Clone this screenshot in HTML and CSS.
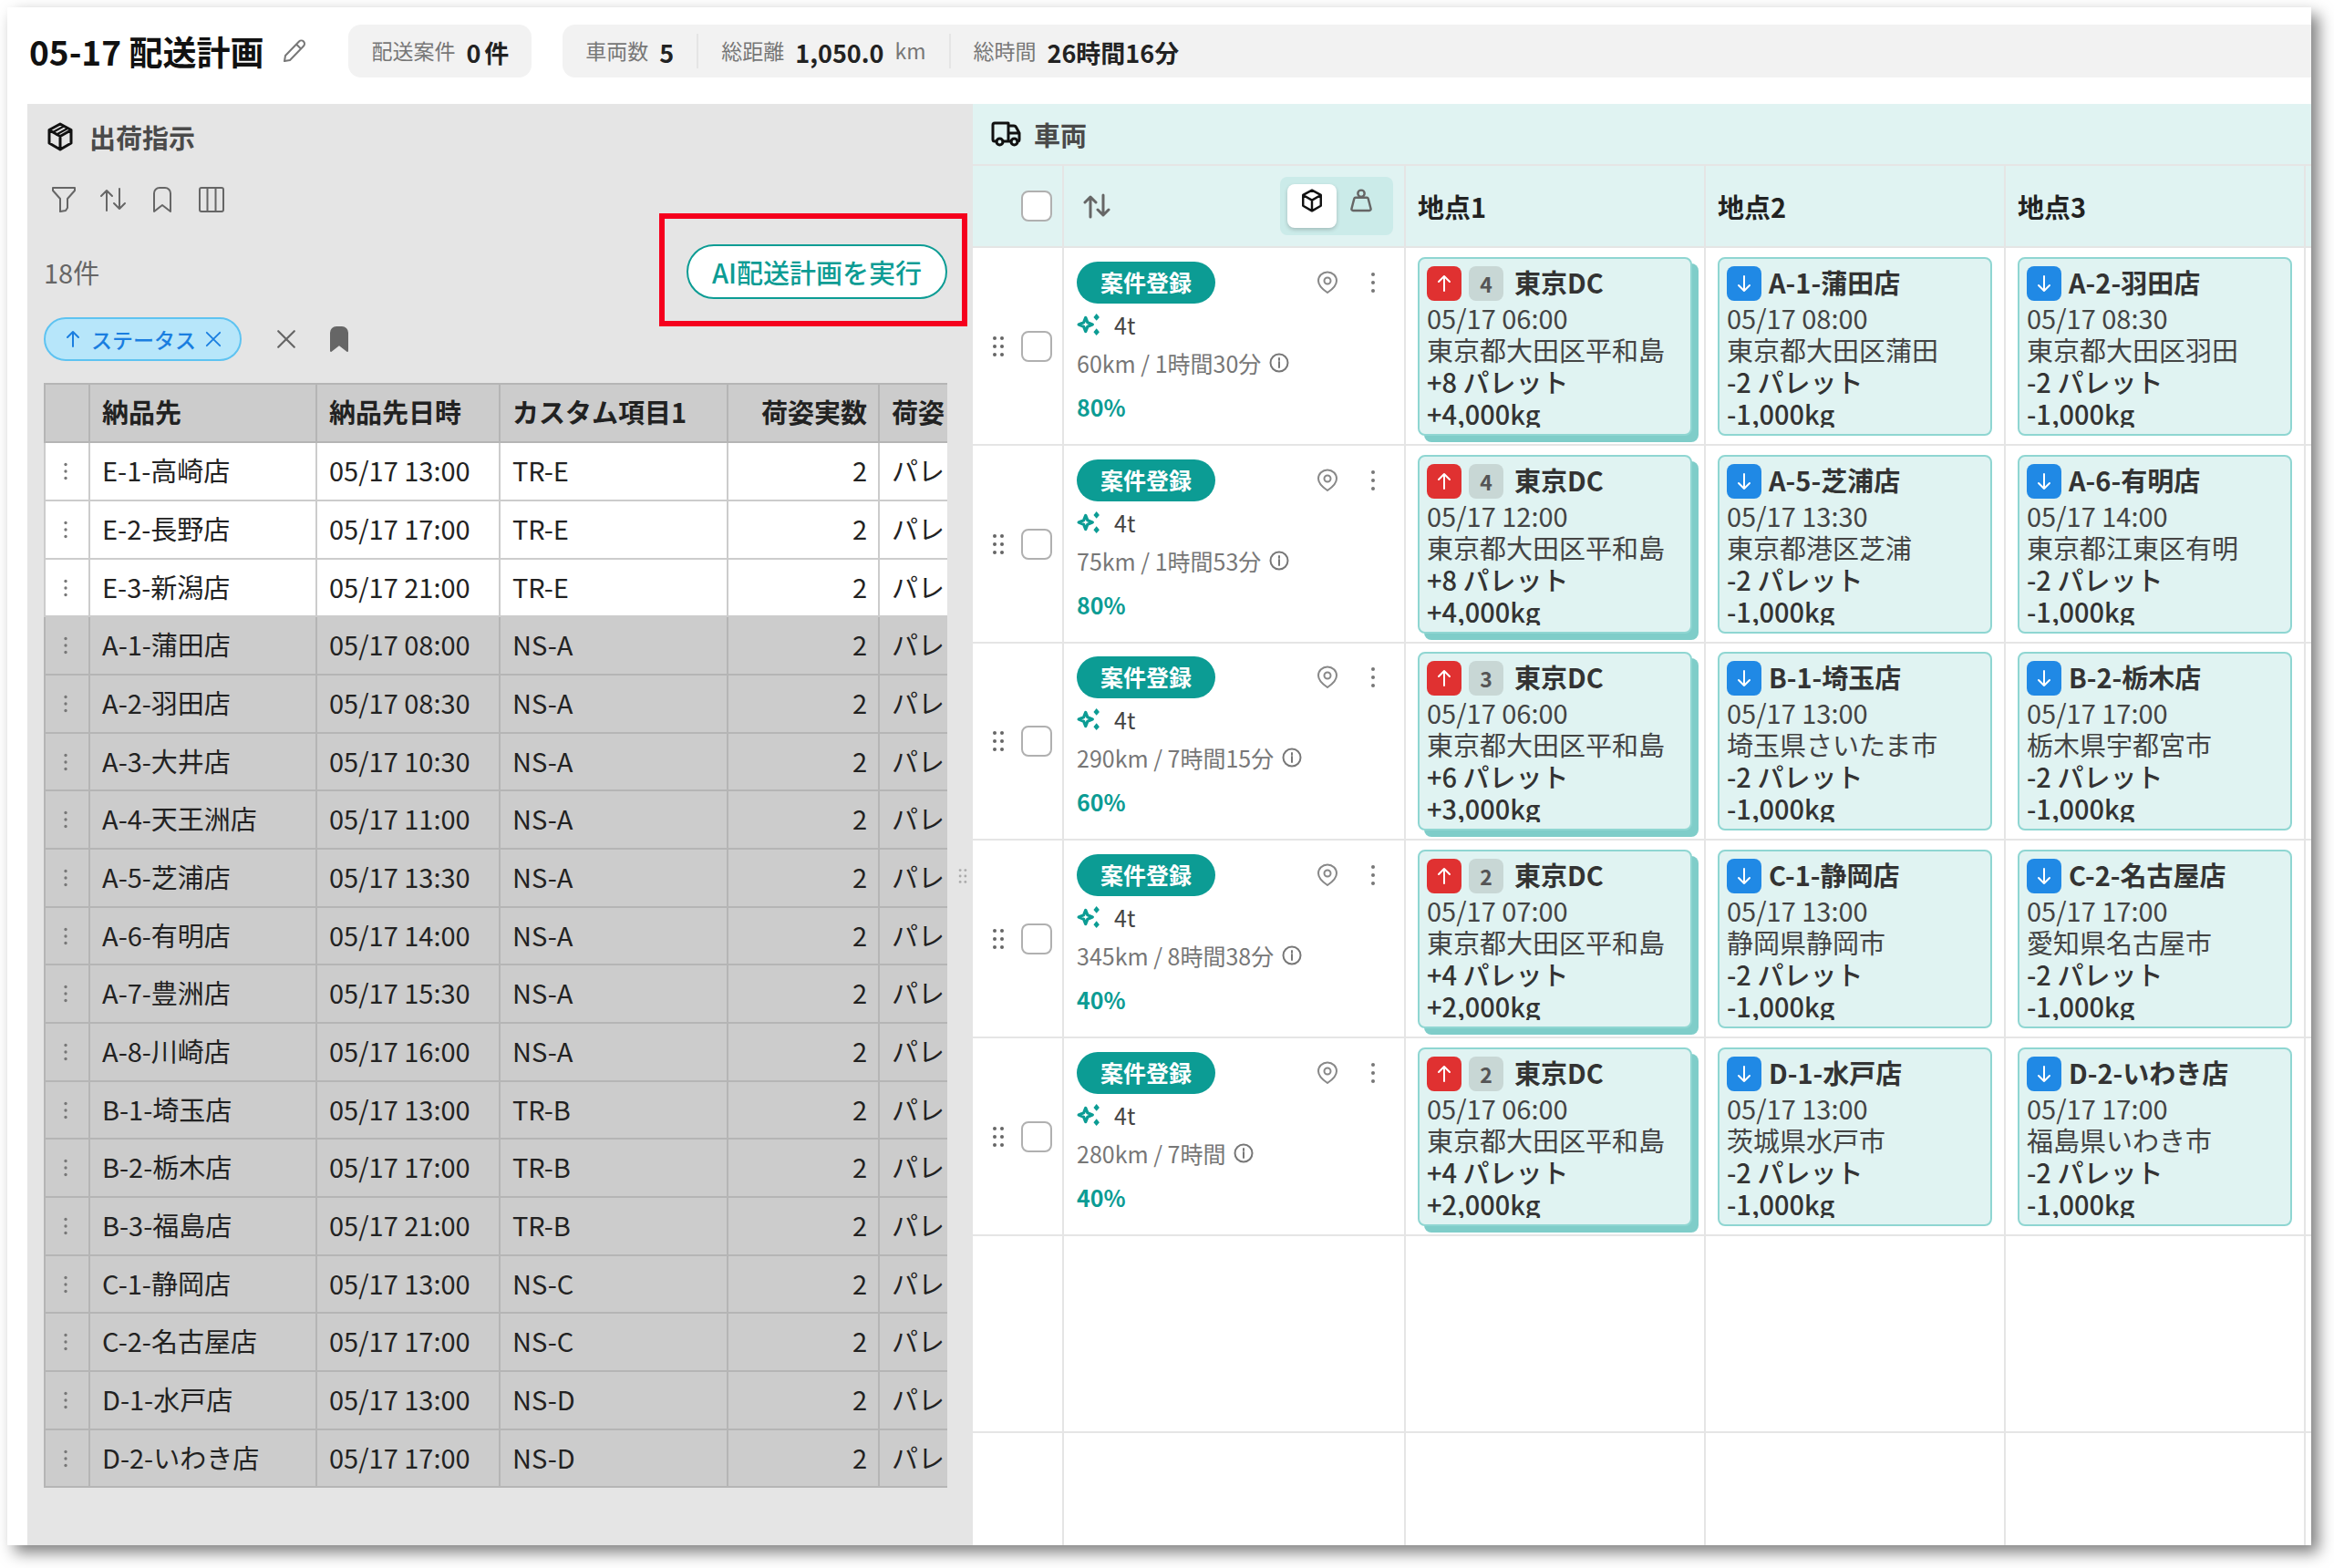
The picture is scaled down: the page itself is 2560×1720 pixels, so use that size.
FILE: index.html
```html
<!DOCTYPE html>
<html lang="ja">
<head>
<meta charset="utf-8">
<title>05-17 配送計画</title>
<link rel="stylesheet" href="styles.css">
</head>
<body>
<svg class="sprite" aria-hidden="true">
  <symbol id="package" viewBox="0 0 30 32"><path d="M15 2 27 8.500V23L15 30 3 23V8.500ZM3.500 9 15 15.500 26.500 9M15 15.500V30"/><path stroke-width="2" d="M7 11 19 4.500M11 13.500 23 7"/></symbol>
  <symbol id="cube" viewBox="0 0 30 32"><path d="M15 2 27 8.500V23L15 30 3 23V8.500ZM3.500 9 15 15.500 26.500 9M15 15.500V30"/></symbol>
  <symbol id="weight" viewBox="0 0 30 32"><circle cx="15" cy="6.500" r="4.500"/><path d="M7.500 12h15a2 2 0 0 1 2 1.500L28 27a2 2 0 0 1-2 2.500H4A2 2 0 0 1 2 27l3.500-13.500a2 2 0 0 1 2-1.500Z"/></symbol>
  <symbol id="truck" viewBox="0 0 34 28"><path d="M6 22H4a2 2 0 0 1-2-2V4a2 2 0 0 1 2-2h15v20h-6M19 5h6a3 3 0 0 1 2.500 1.500L31 13v7a2 2 0 0 1-2 2M19 13h12M19 22h3"/><circle cx="9.500" cy="22.500" r="3.500"/><circle cx="25.500" cy="22.500" r="3.500"/></symbol>
  <symbol id="filter" viewBox="0 0 28 30"><path d="M2 2h24v3l-8 9v10l-2 3-6 1V14L2 5Z"/></symbol>
  <symbol id="sort" viewBox="0 0 30 26"><path d="M8 25V3M2 9l6-6 6 6M22 1v22M16 17l6 6 6-6"/></symbol>
  <symbol id="bookmark" viewBox="0 0 22 30"><path d="M2 28V8a6 6 0 0 1 6-6h6a6 6 0 0 1 6 6v20l-9-7Z"/></symbol>
  <symbol id="columns" viewBox="0 0 30 30"><rect x="2" y="2" width="26" height="26" rx="2"/><path d="M10.500 2v26M19.500 2v26"/></symbol>
  <symbol id="pencil" viewBox="0 0 28 28"><path d="M3 25l1-6L19 3.500a3.500 3.500 0 0 1 5 5L9 24ZM16 6.500l5 5"/></symbol>
  <symbol id="up" viewBox="0 0 20 20"><path d="M10 18V2M4 8l6-6 6 6"/></symbol>
  <symbol id="down" viewBox="0 0 20 20"><path d="M10 2v16M4 12l6 6 6-6"/></symbol>
  <symbol id="close" viewBox="0 0 20 20"><path d="M2 2l16 16M18 2 2 18"/></symbol>
  <symbol id="pin" viewBox="0 0 24 26"><path d="M12 24C6 20 2 15 2 11a10 9.500 0 0 1 20 0c0 4-4 9-10 13Z"/><circle cx="12" cy="11" r="3.500"/></symbol>
  <symbol id="info" viewBox="0 0 22 22"><circle cx="11" cy="11" r="9.500"/><path d="M11 10v6M11 6v2"/></symbol>
  <symbol id="dots" viewBox="0 0 6 24"><g class="dot"><circle cx="3" cy="3" r="2"/><circle cx="3" cy="12" r="2"/><circle cx="3" cy="21" r="2"/></g></symbol>
  <symbol id="grip" viewBox="0 0 14 24"><g class="dot"><circle cx="3" cy="3" r="2"/><circle cx="3" cy="12" r="2"/><circle cx="3" cy="21" r="2"/><circle cx="11" cy="3" r="2"/><circle cx="11" cy="12" r="2"/><circle cx="11" cy="21" r="2"/></g></symbol>
  <symbol id="sparkle" viewBox="0 0 24 24"><path d="M9 5l2 5 5 2-5 2-2 5-2-5-5-2 5-2Z"/><g class="dot"><path d="M20 1l3 3.500-3 3.500-3-3.500ZM20 16l3 3.500-3 3.500-3-3.500Z"/></g></symbol>
</svg>

<main class="window">
  <header class="topbar">
    <h1>05-17 配送計画</h1>
    <button class="icon-btn edit" aria-label="名前を編集"><svg class="i28"><use href="#pencil"/></svg></button>
    <div class="stats single">
      <div class="stat"><span>配送案件</span><b>0</b><b class="unit">件</b></div>
    </div>
    <div class="stats wide">
      <div class="stat"><span>車両数</span><b>5</b></div>
      <div class="stat"><span>総距離</span><b>1,050.0</b><span>km</span></div>
      <div class="stat"><span>総時間</span><b>26時間16分</b></div>
    </div>
  </header>

  <div class="workspace">
    <section class="orders">
      <div class="orders-body">
        <h2 class="heading"><svg class="i32 ink"><use href="#package"/></svg>出荷指示</h2>
        <div class="tools">
          <button class="icon-btn" aria-label="絞り込み"><svg class="i30"><use href="#filter"/></svg></button>
          <button class="icon-btn" aria-label="並び替え"><svg class="i30"><use href="#sort"/></svg></button>
          <button class="icon-btn" aria-label="保存"><svg class="i30"><use href="#bookmark"/></svg></button>
          <button class="icon-btn" aria-label="列"><svg class="i30"><use href="#columns"/></svg></button>
        </div>
        <div class="run-row">
          <span class="count">18件</span>
          <div class="callout"><button class="run">AI配送計画を実行</button></div>
        </div>
        <div class="chips">
          <button class="chip"><svg class="i20"><use href="#up"/></svg>ステータス<svg class="i18"><use href="#close"/></svg></button>
          <button class="icon-btn" aria-label="クリア"><svg class="i22"><use href="#close"/></svg></button>
          <button class="icon-btn" aria-label="条件を保存"><svg class="i30 solid"><use href="#bookmark"/></svg></button>
        </div>
        <table class="order-table">
          <colgroup><col class="c-grip"><col class="c-dest"><col class="c-date"><col class="c-custom"><col class="c-num"><col></colgroup>
          <thead><tr><th></th><th>納品先</th><th>納品先日時</th><th>カスタム項目1</th><th class="num">荷姿実数</th><th>荷姿</th></tr></thead>
          <tbody>
            <tr class="open"><td><svg class="grip-v"><use href="#dots"/></svg></td><td>E-1-高崎店</td><td>05/17 13:00</td><td>TR-E</td><td class="num">2</td><td>パレ</td></tr>
            <tr class="open"><td><svg class="grip-v"><use href="#dots"/></svg></td><td>E-2-長野店</td><td>05/17 17:00</td><td>TR-E</td><td class="num">2</td><td>パレ</td></tr>
            <tr class="open"><td><svg class="grip-v"><use href="#dots"/></svg></td><td>E-3-新潟店</td><td>05/17 21:00</td><td>TR-E</td><td class="num">2</td><td>パレ</td></tr>
            <tr><td><svg class="grip-v"><use href="#dots"/></svg></td><td>A-1-蒲田店</td><td>05/17 08:00</td><td>NS-A</td><td class="num">2</td><td>パレ</td></tr>
            <tr><td><svg class="grip-v"><use href="#dots"/></svg></td><td>A-2-羽田店</td><td>05/17 08:30</td><td>NS-A</td><td class="num">2</td><td>パレ</td></tr>
            <tr><td><svg class="grip-v"><use href="#dots"/></svg></td><td>A-3-大井店</td><td>05/17 10:30</td><td>NS-A</td><td class="num">2</td><td>パレ</td></tr>
            <tr><td><svg class="grip-v"><use href="#dots"/></svg></td><td>A-4-天王洲店</td><td>05/17 11:00</td><td>NS-A</td><td class="num">2</td><td>パレ</td></tr>
            <tr><td><svg class="grip-v"><use href="#dots"/></svg></td><td>A-5-芝浦店</td><td>05/17 13:30</td><td>NS-A</td><td class="num">2</td><td>パレ</td></tr>
            <tr><td><svg class="grip-v"><use href="#dots"/></svg></td><td>A-6-有明店</td><td>05/17 14:00</td><td>NS-A</td><td class="num">2</td><td>パレ</td></tr>
            <tr><td><svg class="grip-v"><use href="#dots"/></svg></td><td>A-7-豊洲店</td><td>05/17 15:30</td><td>NS-A</td><td class="num">2</td><td>パレ</td></tr>
            <tr><td><svg class="grip-v"><use href="#dots"/></svg></td><td>A-8-川崎店</td><td>05/17 16:00</td><td>NS-A</td><td class="num">2</td><td>パレ</td></tr>
            <tr><td><svg class="grip-v"><use href="#dots"/></svg></td><td>B-1-埼玉店</td><td>05/17 13:00</td><td>TR-B</td><td class="num">2</td><td>パレ</td></tr>
            <tr><td><svg class="grip-v"><use href="#dots"/></svg></td><td>B-2-栃木店</td><td>05/17 17:00</td><td>TR-B</td><td class="num">2</td><td>パレ</td></tr>
            <tr><td><svg class="grip-v"><use href="#dots"/></svg></td><td>B-3-福島店</td><td>05/17 21:00</td><td>TR-B</td><td class="num">2</td><td>パレ</td></tr>
            <tr><td><svg class="grip-v"><use href="#dots"/></svg></td><td>C-1-静岡店</td><td>05/17 13:00</td><td>NS-C</td><td class="num">2</td><td>パレ</td></tr>
            <tr><td><svg class="grip-v"><use href="#dots"/></svg></td><td>C-2-名古屋店</td><td>05/17 17:00</td><td>NS-C</td><td class="num">2</td><td>パレ</td></tr>
            <tr><td><svg class="grip-v"><use href="#dots"/></svg></td><td>D-1-水戸店</td><td>05/17 13:00</td><td>NS-D</td><td class="num">2</td><td>パレ</td></tr>
            <tr><td><svg class="grip-v"><use href="#dots"/></svg></td><td>D-2-いわき店</td><td>05/17 17:00</td><td>NS-D</td><td class="num">2</td><td>パレ</td></tr>
          </tbody>
        </table>
      </div>
      <div class="splitter"><svg class="grip-s"><use href="#grip"/></svg></div>
    </section>

    <section class="vehicles">
      <h2 class="heading strip"><svg class="i34 ink"><use href="#truck"/></svg>車両</h2>
      <table class="board">
        <colgroup><col class="v-check"><col class="v-info"><col class="v-stop"><col class="v-stop"><col class="v-stop"><col></colgroup>
        <thead>
          <tr>
            <th><div class="pick"><input type="checkbox" aria-label="すべて選択"></div></th>
            <th><div class="board-tools">
              <button class="icon-btn" aria-label="車両の並び替え"><svg class="i30 bold"><use href="#sort"/></svg></button>
              <div class="toggle">
                <button class="on" aria-label="荷量"><svg class="i26 ink"><use href="#cube"/></svg></button>
                <button aria-label="重量"><svg class="i26 bold"><use href="#weight"/></svg></button>
              </div>
            </div></th>
            <th>地点1</th><th>地点2</th><th>地点3</th><th></th>
          </tr>
        </thead>
        <tbody>
          <tr>
            <td><div class="pick"><svg class="grip-h"><use href="#grip"/></svg><input type="checkbox" aria-label="車両1を選択"></div></td>
            <td><div class="info"><div class="info-top"><button class="register">案件登録</button><button class="icon-btn" aria-label="地図"><svg class="i26"><use href="#pin"/></svg></button><button class="icon-btn" aria-label="メニュー"><svg class="more"><use href="#dots"/></svg></button></div>
              <p class="truck-type"><svg class="i26 teal"><use href="#sparkle"/></svg>4t</p><p class="route">60km / 1時間30分<svg class="i22"><use href="#info"/></svg></p><p class="rate">80%</p></div></td>
            <td><article class="stop load"><h3><i class="tag"><svg class="i20"><use href="#up"/></svg></i><i class="qty">4</i>東京DC</h3><p>05/17 06:00</p><p>東京都大田区平和島</p><p class="amt">+8 パレット</p><p class="amt">+4,000kg</p></article></td>
            <td><article class="stop"><h3><i class="tag"><svg class="i20"><use href="#down"/></svg></i>A-1-蒲田店</h3><p>05/17 08:00</p><p>東京都大田区蒲田</p><p class="amt">-2 パレット</p><p class="amt">-1,000kg</p></article></td>
            <td><article class="stop"><h3><i class="tag"><svg class="i20"><use href="#down"/></svg></i>A-2-羽田店</h3><p>05/17 08:30</p><p>東京都大田区羽田</p><p class="amt">-2 パレット</p><p class="amt">-1,000kg</p></article></td>
            <td></td>
          </tr>
          <tr>
            <td><div class="pick"><svg class="grip-h"><use href="#grip"/></svg><input type="checkbox" aria-label="車両2を選択"></div></td>
            <td><div class="info"><div class="info-top"><button class="register">案件登録</button><button class="icon-btn" aria-label="地図"><svg class="i26"><use href="#pin"/></svg></button><button class="icon-btn" aria-label="メニュー"><svg class="more"><use href="#dots"/></svg></button></div>
              <p class="truck-type"><svg class="i26 teal"><use href="#sparkle"/></svg>4t</p><p class="route">75km / 1時間53分<svg class="i22"><use href="#info"/></svg></p><p class="rate">80%</p></div></td>
            <td><article class="stop load"><h3><i class="tag"><svg class="i20"><use href="#up"/></svg></i><i class="qty">4</i>東京DC</h3><p>05/17 12:00</p><p>東京都大田区平和島</p><p class="amt">+8 パレット</p><p class="amt">+4,000kg</p></article></td>
            <td><article class="stop"><h3><i class="tag"><svg class="i20"><use href="#down"/></svg></i>A-5-芝浦店</h3><p>05/17 13:30</p><p>東京都港区芝浦</p><p class="amt">-2 パレット</p><p class="amt">-1,000kg</p></article></td>
            <td><article class="stop"><h3><i class="tag"><svg class="i20"><use href="#down"/></svg></i>A-6-有明店</h3><p>05/17 14:00</p><p>東京都江東区有明</p><p class="amt">-2 パレット</p><p class="amt">-1,000kg</p></article></td>
            <td></td>
          </tr>
          <tr>
            <td><div class="pick"><svg class="grip-h"><use href="#grip"/></svg><input type="checkbox" aria-label="車両3を選択"></div></td>
            <td><div class="info"><div class="info-top"><button class="register">案件登録</button><button class="icon-btn" aria-label="地図"><svg class="i26"><use href="#pin"/></svg></button><button class="icon-btn" aria-label="メニュー"><svg class="more"><use href="#dots"/></svg></button></div>
              <p class="truck-type"><svg class="i26 teal"><use href="#sparkle"/></svg>4t</p><p class="route">290km / 7時間15分<svg class="i22"><use href="#info"/></svg></p><p class="rate">60%</p></div></td>
            <td><article class="stop load"><h3><i class="tag"><svg class="i20"><use href="#up"/></svg></i><i class="qty">3</i>東京DC</h3><p>05/17 06:00</p><p>東京都大田区平和島</p><p class="amt">+6 パレット</p><p class="amt">+3,000kg</p></article></td>
            <td><article class="stop"><h3><i class="tag"><svg class="i20"><use href="#down"/></svg></i>B-1-埼玉店</h3><p>05/17 13:00</p><p>埼玉県さいたま市</p><p class="amt">-2 パレット</p><p class="amt">-1,000kg</p></article></td>
            <td><article class="stop"><h3><i class="tag"><svg class="i20"><use href="#down"/></svg></i>B-2-栃木店</h3><p>05/17 17:00</p><p>栃木県宇都宮市</p><p class="amt">-2 パレット</p><p class="amt">-1,000kg</p></article></td>
            <td></td>
          </tr>
          <tr>
            <td><div class="pick"><svg class="grip-h"><use href="#grip"/></svg><input type="checkbox" aria-label="車両4を選択"></div></td>
            <td><div class="info"><div class="info-top"><button class="register">案件登録</button><button class="icon-btn" aria-label="地図"><svg class="i26"><use href="#pin"/></svg></button><button class="icon-btn" aria-label="メニュー"><svg class="more"><use href="#dots"/></svg></button></div>
              <p class="truck-type"><svg class="i26 teal"><use href="#sparkle"/></svg>4t</p><p class="route">345km / 8時間38分<svg class="i22"><use href="#info"/></svg></p><p class="rate">40%</p></div></td>
            <td><article class="stop load"><h3><i class="tag"><svg class="i20"><use href="#up"/></svg></i><i class="qty">2</i>東京DC</h3><p>05/17 07:00</p><p>東京都大田区平和島</p><p class="amt">+4 パレット</p><p class="amt">+2,000kg</p></article></td>
            <td><article class="stop"><h3><i class="tag"><svg class="i20"><use href="#down"/></svg></i>C-1-静岡店</h3><p>05/17 13:00</p><p>静岡県静岡市</p><p class="amt">-2 パレット</p><p class="amt">-1,000kg</p></article></td>
            <td><article class="stop"><h3><i class="tag"><svg class="i20"><use href="#down"/></svg></i>C-2-名古屋店</h3><p>05/17 17:00</p><p>愛知県名古屋市</p><p class="amt">-2 パレット</p><p class="amt">-1,000kg</p></article></td>
            <td></td>
          </tr>
          <tr>
            <td><div class="pick"><svg class="grip-h"><use href="#grip"/></svg><input type="checkbox" aria-label="車両5を選択"></div></td>
            <td><div class="info"><div class="info-top"><button class="register">案件登録</button><button class="icon-btn" aria-label="地図"><svg class="i26"><use href="#pin"/></svg></button><button class="icon-btn" aria-label="メニュー"><svg class="more"><use href="#dots"/></svg></button></div>
              <p class="truck-type"><svg class="i26 teal"><use href="#sparkle"/></svg>4t</p><p class="route">280km / 7時間<svg class="i22"><use href="#info"/></svg></p><p class="rate">40%</p></div></td>
            <td><article class="stop load"><h3><i class="tag"><svg class="i20"><use href="#up"/></svg></i><i class="qty">2</i>東京DC</h3><p>05/17 06:00</p><p>東京都大田区平和島</p><p class="amt">+4 パレット</p><p class="amt">+2,000kg</p></article></td>
            <td><article class="stop"><h3><i class="tag"><svg class="i20"><use href="#down"/></svg></i>D-1-水戸店</h3><p>05/17 13:00</p><p>茨城県水戸市</p><p class="amt">-2 パレット</p><p class="amt">-1,000kg</p></article></td>
            <td><article class="stop"><h3><i class="tag"><svg class="i20"><use href="#down"/></svg></i>D-2-いわき店</h3><p>05/17 17:00</p><p>福島県いわき市</p><p class="amt">-2 パレット</p><p class="amt">-1,000kg</p></article></td>
            <td></td>
          </tr>
          <tr><td></td><td></td><td></td><td></td><td></td><td></td></tr>
          <tr class="rest"><td></td><td></td><td></td><td></td><td></td><td></td></tr>
        </tbody>
      </table>
    </section>
  </div>
</main>
</body>
</html>
```
FILE: styles.css
```css
* { box-sizing: border-box; }

body {
  margin: 0;
  padding: 8px 25px 25px 8px;
  min-height: 100vh;
  display: flex;
  background: #fff;
  color: #222;
  font-family: "Noto Sans CJK JP", sans-serif;
  font-size: 29px;
  line-height: 36px;
}

h1, h2, h3, p { margin: 0; }

button {
  padding: 0;
  border: 0;
  background: none;
  color: inherit;
  font: inherit;
  cursor: pointer;
}

svg {
  display: block;
  flex: none;
  fill: none;
  stroke: currentColor;
  stroke-width: 2;
  stroke-linecap: round;
  stroke-linejoin: round;
}

.sprite { position: absolute; width: 0; height: 0; }
.dot { fill: currentColor; stroke: none; }
.i18 { width: 18px; height: 18px; }
.i20 { width: 20px; height: 20px; }
.i22 { width: 22px; height: 22px; }
.i26 { width: 26px; height: 26px; }
.i28 { width: 28px; height: 28px; }
.i30 { width: 30px; height: 30px; }
.i32 { width: 32px; height: 32px; }
.i34 { width: 34px; height: 28px; }
.bold { stroke-width: 3; }
.ink { color: #111; stroke-width: 3; }
.solid { fill: currentColor; }
.teal { color: #0c9c94; stroke-width: 3; }

.icon-btn {
  display: flex;
  align-items: center;
  justify-content: center;
  color: #666;
}

.window {
  flex: 1;
  min-width: 0;
  display: flex;
  flex-direction: column;
  background: #fff;
  box-shadow: 8px 8px 16px rgba(0, 0, 0, 0.5);
}

/* Top bar */
.topbar {
  display: flex;
  align-items: center;
  padding: 19px 0 29px 24px;
}

.topbar h1 { font-size: 37px; line-height: 58px; font-weight: 700; color: #111; }
.edit { margin: 0 45px 0 20px; color: #777; }

.stats { display: flex; align-items: center; height: 58px; background: #f2f2f2; }
.stats.single { margin-right: 34px; border-radius: 14px; }
.stats.wide { flex: 1; border-radius: 14px 0 0 14px; }

.stat { display: flex; align-items: center; gap: 12px; height: 38px; padding: 0 25px; color: #777; font-size: 23px; }
.stat span { padding-bottom: 2px; }
.stat + .stat { border-left: 2px solid #e5e5e5; }
.stat b { padding-top: 4px; font-size: 27px; color: #222; }
.stat .unit { margin-left: -8px; }

/* Two-pane workspace */
.workspace {
  flex: 1;
  display: grid;
  grid-template-columns: minmax(0, 1037px) minmax(0, 1fr);
  margin-left: 22px;
}

.heading { display: flex; align-items: center; font-size: 29px; line-height: 36px; font-weight: 700; color: #4a4a4a; }

.orders { display: flex; background: #e5e5e5; }
.orders-body { flex: 1; min-width: 0; padding: 18px 0 0 18px; }
.orders .heading { gap: 16px; padding-left: 2px; }
.tools { display: flex; gap: 24px; height: 36px; margin-top: 33px; padding-left: 7px; }

.run-row { display: flex; align-items: center; justify-content: space-between; margin-top: 31px; }
.count { color: #666; }
.callout { position: relative; }
.callout::after {
  content: "";
  position: absolute;
  inset: -34px -22px -30px -30px;
  border: 6px solid #f5001d;
  pointer-events: none;
}
.run {
  height: 60px;
  padding: 0 26px;
  border: 2px solid #0c9c94;
  border-radius: 30px;
  background: #fff;
  color: #0c9c94;
  font-weight: 500;
}

.chips { display: flex; align-items: center; margin-top: 20px; gap: 32px; }
.chip {
  display: flex;
  align-items: center;
  gap: 10px;
  height: 48px;
  margin-right: 6px;
  padding: 0 20px;
  border: 2px solid #5ec3f1;
  border-radius: 24px;
  background: #b7e6fa;
  color: #1a7ee0;
  font-size: 23px;
  font-weight: 500;
}

.order-table {
  width: 100%;
  margin-top: 24px;
  border-spacing: 0;
  table-layout: fixed;
  border-top: 2px solid #b5b5b5;
}
.c-grip { width: 51px; }
.c-dest { width: 249px; }
.c-date { width: 201px; }
.c-custom { width: 250px; }
.c-num { width: 166px; }
.order-table th, .order-table td {
  padding: 0 12px 4px 13px;
  border: solid #b5b5b5;
  border-width: 0 2px 2px 0;
  background: #ccc;
  text-align: left;
  white-space: nowrap;
}
.order-table th:first-child, .order-table td:first-child { padding: 0 16px 0 12px; border-left-width: 2px; }
.order-table th:last-child, .order-table td:last-child { border-right-width: 0; }
.order-table .num { text-align: right; }
.order-table tr { height: 64px; }
.order-table tbody tr:nth-child(3n) { height: 63px; }
.order-table .open td { background: #fff; border-color: #ccc; }
.grip-v { width: 6px; height: 20px; margin: 0 auto; color: #777; }

.splitter { display: flex; align-items: center; justify-content: center; width: 28px; padding: 112px 0 0 6px; }
.grip-s { width: 10px; height: 18px; color: #aaa; }

/* Vehicle board */
.vehicles { min-width: 0; }
.strip {
  gap: 13px;
  height: 68px;
  padding: 0 20px;
  border-bottom: 2px solid #e5e5e5;
  background: #e0f3f2;
}

.board { width: 100%; border-spacing: 0; table-layout: fixed; }
.v-check { width: 100px; }
.v-info { width: 375px; }
.v-stop { width: 329px; }
.board th, .board td {
  padding: 0;
  border: solid #e5e5e5;
  border-width: 0 2px 2px 0;
  text-align: left;
}
.board th { height: 90px; padding-left: 13px; background: #e0f3f2; color: #222; }
.board th:first-child, .board th:nth-child(2), .board th:last-child { padding-left: 0; }
.board th:last-child, .board td:last-child { border-right-width: 0; }
.board tbody tr { height: 217px; }
.board tbody tr:nth-child(3n) { height: 216px; }
.board tbody .rest { height: 123px; }
.board tbody .rest td { border-bottom-width: 0; }

.pick { display: flex; align-items: center; justify-content: flex-end; gap: 18px; padding-right: 11px; }
.pick input {
  appearance: none;
  width: 34px;
  height: 34px;
  margin: 0;
  border: 2px solid #b0b0b0;
  border-radius: 8px;
  background: #fff;
}
.grip-h { width: 14px; height: 24px; color: #666; }

.board-tools { display: flex; align-items: center; justify-content: space-between; padding: 0 12px 0 21px; }
.toggle { display: flex; height: 64px; padding: 8px; border-radius: 8px; background: #cbebe9; }
.toggle button { display: flex; justify-content: center; width: 54px; height: 48px; padding-top: 5px; border-radius: 8px; color: #666; }
.toggle .on { background: #fff; box-shadow: 0 2px 4px rgba(0, 0, 0, 0.2); }

.info { height: 214px; padding: 14px 9px 0 14px; font-size: 25px; line-height: 42px; }
.info-top { display: flex; align-items: center; margin-bottom: 2px; }
.info-top .icon-btn { width: 50px; height: 46px; color: #888; }
.info-top .more { width: 6px; height: 24px; color: #777; }
.register {
  height: 46px;
  margin-right: auto;
  padding: 0 26px 2px;
  border-radius: 23px;
  background: #0c9c94;
  color: #fff;
  font-weight: 700;
}
.truck-type { display: flex; align-items: center; gap: 15px; color: #444; }
.route { display: flex; align-items: center; gap: 9px; color: #777; }
.rate { margin-top: 6px; color: #0c9c94; font-weight: 700; }

.stop {
  height: 196px;
  margin: 0 13px;
  padding: 8px;
  border: 2px solid #8fd6d2;
  border-radius: 8px;
  background: #e0f3f2;
  color: #444;
  line-height: 35px;
  white-space: nowrap;
}
.stop.load { box-shadow: 7px 7px 0 #7fcdc9; }
.stop h3 { display: flex; gap: 8px; height: 38px; margin-bottom: 1px; font-size: 29px; line-height: 34px; font-weight: 700; color: #333; }
.stop i {
  display: flex;
  align-items: center;
  justify-content: center;
  width: 38px;
  height: 38px;
  border-radius: 8px;
  font-style: normal;
}
.stop .tag { background: #2089e5; color: #fff; }
.stop.load .tag { background: #e03131; }
.stop .qty { margin-right: 4px; background: #c8d7d5; color: #555; font-size: 23px; }
.stop .amt { color: #333; font-weight: 500; }
.stop .amt:last-child { height: 33px; overflow: hidden; }
```
